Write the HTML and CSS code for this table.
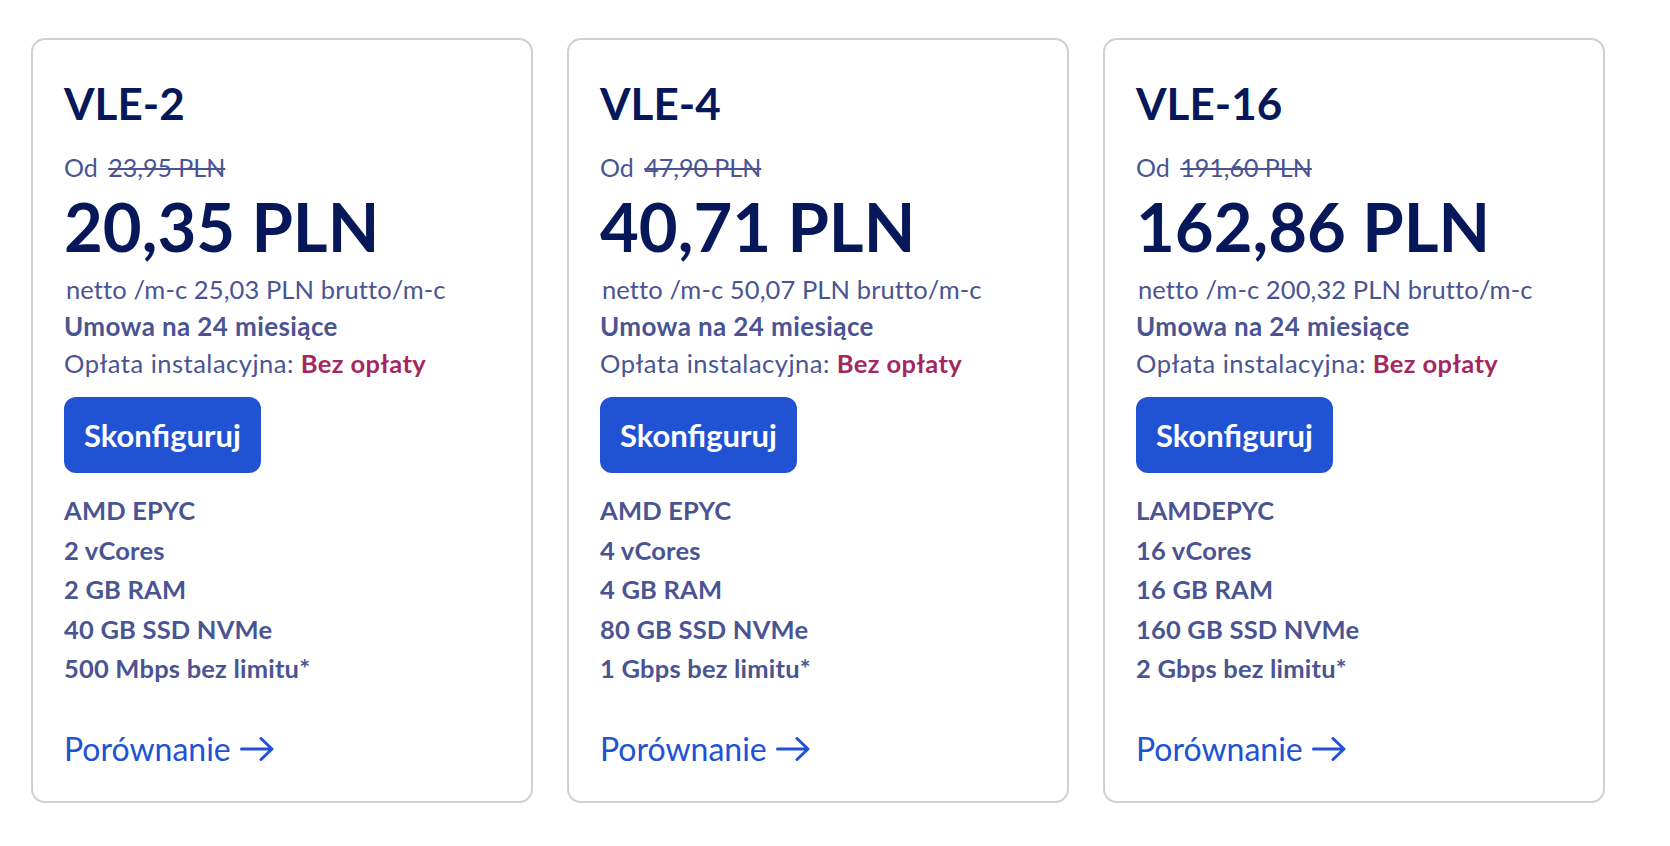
FILE: index.html
```html
<!DOCTYPE html>
<html lang="pl">
<head>
<meta charset="utf-8">
<title>VLE</title>
<link rel="stylesheet" href="styles.css">
</head>
<body>
<div class="plans">
  <div class="card">
    <h2 class="name">VLE-2</h2>
    <div class="from">Od <s class="old">23,95 PLN</s></div>
    <div class="price">20,35 PLN</div>
    <div class="line net">netto /m-c 25,03 PLN brutto/m-c</div>
    <div class="line strong">Umowa na 24 miesiące</div>
    <div class="line fee">Opłata instalacyjna: <span class="free">Bez opłaty</span></div>
    <a class="btn" href="#">Skonfiguruj</a>
    <ul class="specs">
      <li>AMD EPYC</li>
      <li>2 vCores</li>
      <li>2 GB RAM</li>
      <li>40 GB SSD NVMe</li>
      <li>500 Mbps bez limitu*</li>
    </ul>
    <a class="compare" href="#">Porównanie <svg class="arrow" width="34" height="24" viewBox="0 0 34 24"><path d="M1.5 12H32M21 1.5L32 12L21 22.5" fill="none" stroke="currentColor" stroke-width="3" stroke-linecap="round" stroke-linejoin="round"/></svg></a>
  </div>
  <div class="card">
    <h2 class="name">VLE-4</h2>
    <div class="from">Od <s class="old">47,90 PLN</s></div>
    <div class="price">40,71 PLN</div>
    <div class="line net">netto /m-c 50,07 PLN brutto/m-c</div>
    <div class="line strong">Umowa na 24 miesiące</div>
    <div class="line fee">Opłata instalacyjna: <span class="free">Bez opłaty</span></div>
    <a class="btn" href="#">Skonfiguruj</a>
    <ul class="specs">
      <li>AMD EPYC</li>
      <li>4 vCores</li>
      <li>4 GB RAM</li>
      <li>80 GB SSD NVMe</li>
      <li>1 Gbps bez limitu*</li>
    </ul>
    <a class="compare" href="#">Porównanie <svg class="arrow" width="34" height="24" viewBox="0 0 34 24"><path d="M1.5 12H32M21 1.5L32 12L21 22.5" fill="none" stroke="currentColor" stroke-width="3" stroke-linecap="round" stroke-linejoin="round"/></svg></a>
  </div>
  <div class="card">
    <h2 class="name">VLE-16</h2>
    <div class="from">Od <s class="old">191,60 PLN</s></div>
    <div class="price">162,86 PLN</div>
    <div class="line net">netto /m-c 200,32 PLN brutto/m-c</div>
    <div class="line strong">Umowa na 24 miesiące</div>
    <div class="line fee">Opłata instalacyjna: <span class="free">Bez opłaty</span></div>
    <a class="btn" href="#">Skonfiguruj</a>
    <ul class="specs">
      <li>LAMDEPYC</li>
      <li>16 vCores</li>
      <li>16 GB RAM</li>
      <li>160 GB SSD NVMe</li>
      <li>2 Gbps bez limitu*</li>
    </ul>
    <a class="compare" href="#">Porównanie <svg class="arrow" width="34" height="24" viewBox="0 0 34 24"><path d="M1.5 12H32M21 1.5L32 12L21 22.5" fill="none" stroke="currentColor" stroke-width="3" stroke-linecap="round" stroke-linejoin="round"/></svg></a>
  </div>
</div>
</body>
</html>
```

FILE: styles.css
```css
* { box-sizing: border-box; }
html, body {
  margin: 0;
  padding: 0;
  background: #ffffff;
}
body {
  font-family: "Lato", "Noto Sans", sans-serif;
  color: #4a5493;
}
.plans {
  display: flex;
  gap: 34px;
  padding: 38px 0 0 31px;
}
.card {
  width: 502px;
  height: 765px;
  border: 2px solid #d0d0d0;
  border-radius: 14px;
  padding: 37px 20px 0 31px;
  display: flex;
  flex-direction: column;
  align-items: flex-start;
}
.name {
  margin: 0;
  font-size: 44px;
  line-height: 52px;
  font-weight: 700;
  color: #07185a;
}
.from {
  margin-top: 23px;
  font-size: 25px;
  line-height: 30px;
}
.old {
  margin-left: 4px;
  text-decoration-thickness: 2px;
}
.price {
  margin-top: 8px;
  font-size: 67px;
  line-height: 72px;
  font-weight: 700;
  color: #07185a;
}
.line {
  font-size: 25.5px;
  line-height: 37px;
}
.net {
  margin-top: 9px;
  padding-left: 2px;
  letter-spacing: 0.1px;
}
.fee { letter-spacing: 0.5px; }
.strong {
  font-weight: 700;
  font-size: 26px;
  letter-spacing: 0.4px;
}
.free {
  color: #a4285f;
  font-weight: 700;
  letter-spacing: 0.4px;
}
.btn {
  margin-top: 15px;
  height: 76px;
  padding: 0 20px;
  display: flex;
  align-items: center;
  background: #2152d3;
  color: #ffffff;
  border-radius: 12px;
  font-size: 31px;
  font-weight: 700;
  text-decoration: none;
}
.specs {
  list-style: none;
  margin: 18px 0 0;
  padding: 0;
  font-size: 25.5px;
  line-height: 39.5px;
  font-weight: 700;
  letter-spacing: 0.2px;
}
.compare {
  margin-top: 40px;
  display: flex;
  align-items: center;
  gap: 9px;
  font-size: 32px;
  line-height: 40px;
  color: #2152d3;
  text-decoration: none;
}
.arrow {
  display: block;
}
```
